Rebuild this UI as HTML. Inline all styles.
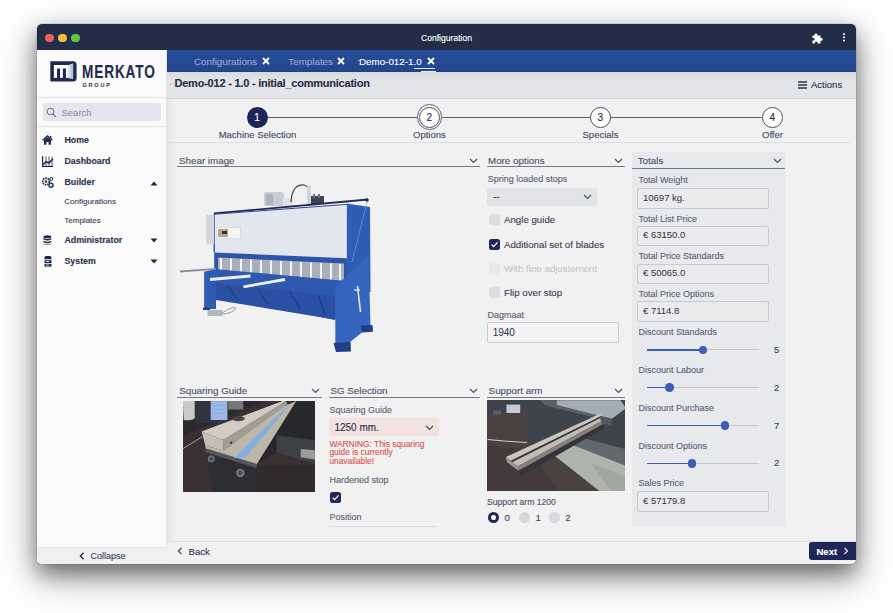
<!DOCTYPE html>
<html><head><meta charset="utf-8">
<style>
*{margin:0;padding:0;box-sizing:border-box}
html,body{width:893px;height:613px;overflow:hidden;background:#fff;font-family:"Liberation Sans",sans-serif}
.a{-webkit-text-stroke:0.12px currentColor}
.win{position:absolute;left:37px;top:24px;width:819px;height:540px;border-radius:5px;overflow:hidden;box-shadow:0 10px 22px 0 rgba(0,0,0,.5),0 14px 44px 3px rgba(0,0,0,.2),0 0 0 1px rgba(0,0,0,.08);background:#f1f1f1}
.pg{position:absolute;left:-37px;top:-24px;width:893px;height:613px}
.a{position:absolute;white-space:nowrap}
.title{left:37px;top:24px;width:819px;height:26px;background:#232d47}
.dot{position:absolute;width:8.6px;height:8.6px;border-radius:50%;top:33.5px}
.side{left:37px;top:50px;width:130px;height:514px;background:#fafafa;border-right:1px solid #e2e3e6}
.tabs{left:167px;top:50px;width:689px;height:21.5px;background:linear-gradient(#274d99,#23468c);border-bottom:1px solid #213f7c}
.crumb{left:167px;top:71.5px;width:689px;height:27px;background:linear-gradient(#d9dadf,#e3e4e8 35%,#e4e5e9);border-bottom:1px solid #d4d5da}
.tab{font-size:9.8px;color:#8ea6da;top:56.2px}
.x{font-size:10px;color:#fff;font-weight:bold}
.mi{font-size:8.8px;font-weight:bold;color:#2b3350}
.sub{font-size:8px;color:#3d4460}
.lbl{font-size:9px;color:#5b6277;margin-top:.7px}
.hdr{font-size:9.8px;color:#4b5268}
.uline{position:absolute;height:1.2px;background:#737787;border-radius:1px}
.inp{position:absolute;background:#ebebee;border:1px solid #c9cace;border-radius:2px;font-size:10px;color:#2b3048;padding-left:5px}
.stl{top:128.8px;width:200px;text-align:center;font-size:9.5px;color:#444a5e}
.cb{position:absolute;width:11px;height:11px;border-radius:2.5px;background:#dcdde2}
.cb.on{background:#1e2757}
.opt{font-size:9.7px;color:#3a4058}
.tin{left:637px;width:132px;height:20.5px;padding-top:2.8px;font-size:9.5px}
.trk{left:647.3px;width:111.4px;height:1.2px;background:#c5c7cd}
.fill{left:647.3px;height:1.6px;background:#3b5fb5}
.thumb{width:8.5px;height:8.5px;border-radius:50%;background:#3b5fb5}
.val{left:774px;font-size:9.5px;color:#3a4058;margin-top:-1px}
</style></head><body>
<div class="win"><div class="pg">
  <!-- title bar -->
  <div class="a title"></div>
  <div class="dot" style="left:45.3px;background:#ee5f57"></div>
  <div class="dot" style="left:58.2px;background:#f2be3d"></div>
  <div class="dot" style="left:71.4px;background:#5fc73f"></div>
  <div class="a" style="left:37px;width:819px;top:32.5px;text-align:center;color:#fff;font-size:8.6px">Configuration</div>

  <!-- sidebar -->
  <div class="a side"></div>
  <!-- logo -->
  <svg class="a" style="left:49px;top:60px" width="30" height="24" viewBox="0 0 30 24">
    <path d="M1.3 1.3 H24 Q27.6 1.3 27.6 5 V18 Q27.6 21.5 24 21.5 H1.3 Z" fill="#1f2a4f"/>
    <rect x="4.85" y="5" width="15" height="12.9" fill="#fff"/>
    <path d="M19.7 5 L24.2 3.2 L24.2 19.3 L19.7 17.9 Z" fill="#a9c6da"/>
    <path d="M19.7 5 L21.6 4.3 L21.6 18.5 L19.7 17.9 Z" fill="#d3e3ec"/>
    <rect x="8" y="8.5" width="3.1" height="9.5" fill="#1f2a4f"/>
    <rect x="13.85" y="8.5" width="3.15" height="9.5" fill="#1f2a4f"/>
    <rect x="5" y="8.2" width="0" height="10" fill="#1f2a4f"/>
  </svg>
  <div class="a" id="mk" style="left:81.6px;top:60.8px;font-size:18.4px;font-weight:bold;color:#1f2a4f;transform:scaleX(.74);transform-origin:0 0;letter-spacing:1.2px">MERKATO</div>
  <div class="a" style="left:82.5px;top:81.5px;font-size:5.5px;font-weight:bold;color:#3a3f52;letter-spacing:1.8px">GROUP</div>
  <div class="a" style="left:37px;top:97px;width:130px;height:1px;background:#e4e5e8"></div>
  <!-- search -->
  <div class="a" style="left:42.5px;top:103px;width:118.5px;height:18px;background:#e4e6eb;border-radius:3px"></div>
  <svg class="a" style="left:46px;top:107px" width="11" height="11" viewBox="0 0 11 11"><circle cx="4.5" cy="4.5" r="3.3" fill="none" stroke="#666b7b" stroke-width="1"/><path d="M6.9 6.9 L9.8 9.8" stroke="#666b7b" stroke-width="1.2"/></svg>
  <div class="a" style="left:61.5px;top:106.5px;font-size:9.5px;color:#8f94a3">Search</div>
  <div class="a" style="left:37px;top:126px;width:130px;height:1px;background:#e4e5e8"></div>
  <!-- menu -->
  <svg class="a" style="left:42px;top:135px" width="11" height="10" viewBox="0 0 11 10"><path d="M0.6 5.3 L5.5 1 L10.4 5.3" fill="none" stroke="#1f2a4f" stroke-width="1.5"/><path d="M2 5 L5.5 2.2 L9 5 V9.7 H6.6 V7 H4.4 V9.7 H2 Z" fill="#1f2a4f"/><rect x="8" y="1" width="1.3" height="2.5" fill="#1f2a4f"/></svg>
  <div class="a mi" style="left:64.5px;top:134.5px">Home</div>
  <svg class="a" style="left:42px;top:156px" width="12" height="11" viewBox="0 0 12 11"><path d="M0.6 0 V10.4 H11.2" fill="none" stroke="#1f2a4f" stroke-width="1.2"/><path d="M1 8.5 L4 6 L7 6.8 L11 3" fill="none" stroke="#1f2a4f" stroke-width="1.6"/><path d="M4 0.5 V9.5 M7 0.5 V9.5 M10 0.5 V9.5" stroke="#1f2a4f" stroke-width="0.8"/></svg>
  <div class="a mi" style="left:64.5px;top:155.5px">Dashboard</div>
  <svg class="a" style="left:42px;top:176.5px" width="12" height="11" viewBox="0 0 12 11"><circle cx="4" cy="4.5" r="3.3" fill="none" stroke="#1f2a4f" stroke-width="1.8" stroke-dasharray="1.6 0.8"/><circle cx="4" cy="4.5" r="1.2" fill="#1f2a4f"/><circle cx="9.2" cy="2" r="1.5" fill="none" stroke="#1f2a4f" stroke-width="1"/><circle cx="9" cy="8.3" r="2" fill="none" stroke="#1f2a4f" stroke-width="1.4"/></svg>
  <div class="a mi" style="left:64.5px;top:176.5px">Builder</div>
  <svg class="a" style="left:149.5px;top:180.5px" width="8" height="5" viewBox="0 0 8 5"><path d="M0.5 4.5 L4 0.5 L7.5 4.5 Z" fill="#1f2a4f"/></svg>
  <div class="a sub" style="left:64.3px;top:197px">Configurations</div>
  <div class="a sub" style="left:64.3px;top:215.5px">Templates</div>
  <svg class="a" style="left:43.4px;top:235.2px" width="8.6" height="11" viewBox="0 0 8.6 11"><ellipse cx="4.3" cy="1.7" rx="3.95" ry="1.55" fill="#1f2a4f"/><path d="M0.35 2.9 V4.5 Q4.3 6.5 8.25 4.5 V2.9 Q4.3 4.9 0.35 2.9 Z" fill="#1f2a4f"/><path d="M0.35 5.7 V7.3 Q4.3 9.3 8.25 7.3 V5.7 Q4.3 7.7 0.35 5.7 Z" fill="#1f2a4f"/><path d="M0.35 8.5 V9.1 Q4.3 11 8.25 9.1 V8.5 Q4.3 10.5 0.35 8.5 Z" fill="#1f2a4f"/></svg>
  <div class="a mi" style="left:64.5px;top:235px">Administrator</div>
  <svg class="a" style="left:149.5px;top:238px" width="8" height="5" viewBox="0 0 8 5"><path d="M0.5 0.5 L4 4.5 L7.5 0.5 Z" fill="#1f2a4f"/></svg>
  <svg class="a" style="left:44px;top:256px" width="8" height="11" viewBox="0 0 8 11"><path d="M1.5 0 H6.5 L7.5 1.5 V3.3 H0.5 V1.5 Z" fill="#1f2a4f"/><rect x="0.5" y="4.2" width="7" height="2.8" fill="#1f2a4f"/><rect x="0.5" y="7.8" width="7" height="2.8" fill="#1f2a4f"/><rect x="2" y="5" width="3" height="0.8" fill="#fff"/><rect x="2" y="8.6" width="3" height="0.8" fill="#fff"/></svg>
  <div class="a mi" style="left:64.5px;top:256px">System</div>
  <svg class="a" style="left:149.5px;top:259px" width="8" height="5" viewBox="0 0 8 5"><path d="M0.5 0.5 L4 4.5 L7.5 0.5 Z" fill="#1f2a4f"/></svg>
  <!-- collapse -->
  <div class="a" style="left:37px;top:547px;width:130px;height:17px;background:#efeff1;border-top:1px solid #e2e3e6"></div>
  <svg class="a" style="left:78.5px;top:552px" width="6" height="8" viewBox="0 0 6 8"><path d="M4.5 0.8 L1.5 4 L4.5 7.2" fill="none" stroke="#2b3350" stroke-width="1.5"/></svg>
  <div class="a" style="left:90.5px;top:551px;font-size:9px;color:#3d4460">Collapse</div>

  <!-- tabs -->
  <div class="a tabs"></div>
  <div class="a tab" style="left:194px">Configurations</div>
  <svg class="a" style="left:262.0px;top:57px" width="8" height="8" viewBox="0 0 8 8"><path d="M1 1 L7 7 M7 1 L1 7" stroke="#fff" stroke-width="1.8"/></svg>
  <div class="a tab" style="left:288.3px">Templates</div>
  <svg class="a" style="left:337.0px;top:57px" width="8" height="8" viewBox="0 0 8 8"><path d="M1 1 L7 7 M7 1 L1 7" stroke="#fff" stroke-width="1.8"/></svg>
  <div class="a" style="left:357.5px;top:60px;width:1px;height:1px;background:#c8d3ee"></div>
  <div class="a tab" style="left:359px;color:#fff">Demo-012-1.0</div>
  <svg class="a" style="left:426.5px;top:57px" width="8" height="8" viewBox="0 0 8 8"><path d="M1 1 L7 7 M7 1 L1 7" stroke="#fff" stroke-width="1.8"/></svg>
  <div class="a" style="left:414px;top:68px;width:21px;height:1px;background:#dfe6f6"></div>
  <div class="a" style="left:421px;top:70.5px;width:15px;height:1.2px;background:#e8ecf5"></div>
  <div class="a crumb"></div>
  <div class="a" style="left:170px;top:83.5px;width:1px;height:1px;background:#8a8fa0"></div>
  <div class="a" style="left:174.5px;top:76.8px;font-size:11px;letter-spacing:-0.22px;font-weight:bold;color:#262c44">Demo-012 - 1.0 - initial_communication</div>
  <svg class="a" style="left:797.5px;top:80.5px" width="10" height="8" viewBox="0 0 10 8"><path d="M0 1 H9 M0 4 H9 M0 7 H9" stroke="#2b3350" stroke-width="1.4"/></svg>
  <div class="a" style="left:811px;top:78.8px;font-size:9.5px;color:#2b3350">Actions</div>
  <!-- title icons -->
  <svg class="a" style="left:811.5px;top:32.5px" width="11" height="11" viewBox="0 0 11 11"><path d="M4 0.5 C5.5 0.5 5.8 1.5 5.3 2.6 L8.5 2.6 L8.5 5.3 C9.8 4.8 10.6 5.3 10.6 6.4 C10.6 7.5 9.8 8 8.5 7.5 L8.5 10.5 L5.5 10.5 C6 9.3 5.5 8.4 4.2 8.4 C3 8.4 2.5 9.3 3 10.5 L0.5 10.5 L0.5 7.4 C1.8 7.9 2.6 7.3 2.6 6.2 C2.6 5.1 1.8 4.6 0.5 5.1 L0.5 2.6 L2.8 2.6 C2.3 1.5 2.6 0.5 4 0.5 Z" fill="#fff"/></svg>
  <div class="a" style="left:842.5px;top:33px;width:2.2px;height:2.2px;border-radius:50%;background:#fff;box-shadow:0 3.3px 0 #fff,0 6.6px 0 #fff"></div>
  <!-- main shadow -->
  <div class="a" style="left:167px;top:98px;width:8px;height:443px;background:linear-gradient(90deg,rgba(0,0,0,.05),rgba(0,0,0,0))"></div>
  <!-- stepper -->
  <div class="a" style="left:257px;top:116.6px;width:515px;height:1.3px;background:#5a5f70"></div>
  <div class="a" style="left:246.6px;top:106.7px;width:21px;height:21px;border-radius:50%;background:#1e2757"></div>
  <div class="a" style="left:246.6px;top:111.5px;width:21px;text-align:center;font-size:10px;color:#fff">1</div>
  <div class="a" style="left:416.5px;top:104.4px;width:25.8px;height:25.8px;border-radius:50%;border:1.3px solid #5f6476;background:#f6f6f8"></div>
  <div class="a" style="left:419px;top:107px;width:20.8px;height:20.8px;border-radius:50%;border:1.3px solid #4a4f62;background:#fff"></div>
  <div class="a" style="left:419px;top:111.5px;width:20.8px;text-align:center;font-size:10px;color:#262b3f">2</div>
  <div class="a" style="left:590px;top:107px;width:20.8px;height:20.8px;border-radius:50%;border:1.3px solid #4a4f62;background:#fff"></div>
  <div class="a" style="left:590px;top:111.5px;width:20.8px;text-align:center;font-size:10px;color:#262b3f">3</div>
  <div class="a" style="left:762px;top:107px;width:20.8px;height:20.8px;border-radius:50%;border:1.3px solid #4a4f62;background:#fff"></div>
  <div class="a" style="left:762px;top:111.5px;width:20.8px;text-align:center;font-size:10px;color:#262b3f">4</div>
  <div class="a stl" style="left:157.5px">Machine Selection</div>
  <div class="a stl" style="left:329.4px">Options</div>
  <div class="a stl" style="left:500.5px">Specials</div>
  <div class="a stl" style="left:672.5px">Offer</div>
  <div class="a" style="left:168px;top:142px;width:682px;height:1px;background:#dcdde1"></div>

  <!-- section headers -->
  <div class="a hdr" style="left:179px;top:154.5px">Shear image</div>
  <div class="uline" style="left:177px;top:166.3px;width:303px"></div>
  <svg class="a chev" style="left:469px;top:157.5px" width="9" height="6" viewBox="0 0 9 6"><path d="M1 1 L4.5 4.5 L8 1" fill="none" stroke="#4b5268" stroke-width="1.2"/></svg>

  <div class="a hdr" style="left:488px;top:154.5px">More options</div>
  <div class="uline" style="left:487px;top:166.3px;width:138px"></div>
  <svg class="a" style="left:614px;top:157.5px" width="9" height="6" viewBox="0 0 9 6"><path d="M1 1 L4.5 4.5 L8 1" fill="none" stroke="#4b5268" stroke-width="1.2"/></svg>

  <div class="a lbl" style="left:487.8px;top:173.3px">Spring loaded stops</div>
  <div class="a" style="left:487px;top:187.5px;width:110px;height:18.5px;background:#e2e3e7;border-radius:3px"></div>
  <div class="a" style="left:493px;top:191px;font-size:10px;color:#2b3048">--</div>
  <svg class="a" style="left:582.5px;top:193.5px" width="9" height="6" viewBox="0 0 9 6"><path d="M1 1 L4.5 4.5 L8 1" fill="none" stroke="#4b5268" stroke-width="1.2"/></svg>

  <div class="a cb" style="left:488.5px;top:214px"></div>
  <div class="a opt" style="left:504px;top:214.3px">Angle guide</div>
  <div class="a cb on" style="left:488.5px;top:238.5px"><svg width="11" height="11" viewBox="0 0 11 11" style="position:absolute;left:0;top:0"><path d="M2.6 5.6 L4.6 7.6 L8.6 3.4" fill="none" stroke="#fff" stroke-width="1.3"/></svg></div>
  <div class="a opt" style="left:504px;top:238.8px">Additional set of blades</div>
  <div class="a cb" style="left:488.5px;top:263px;background:#e8e9ec"></div>
  <div class="a opt" style="left:504px;top:263.3px;color:#c5c8d0">With fine adjustement</div>
  <div class="a cb" style="left:488.5px;top:287px"></div>
  <div class="a opt" style="left:504px;top:287.3px">Flip over stop</div>
  <div class="a lbl" style="left:487.5px;top:309.8px">Dagmaat</div>
  <div class="inp" style="left:486.7px;top:322.4px;width:132.3px;height:20.6px;background:#f3f3f5;padding-top:4px">1940</div>

  <!-- totals panel -->
  <div class="a" style="left:632px;top:151.5px;width:153px;height:374.5px;background:#e8e9ec"></div>
  <div class="a hdr" style="left:637.7px;top:154.8px">Totals</div>
  <div class="uline" style="left:632px;top:167.6px;width:153px"></div>
  <svg class="a" style="left:772.5px;top:157.5px" width="9" height="6" viewBox="0 0 9 6"><path d="M1 1 L4.5 4.5 L8 1" fill="none" stroke="#4b5268" stroke-width="1.2"/></svg>
  <div class="a lbl" style="left:638.4px;top:174.2px">Total Weight</div>
  <div class="inp tin" style="top:188px">10697 kg.</div>
  <div class="a lbl" style="left:638.4px;top:213px">Total List Price</div>
  <div class="inp tin" style="top:225.5px">&#8364; 63150.0</div>
  <div class="a lbl" style="left:638.4px;top:250.6px">Total Price Standards</div>
  <div class="inp tin" style="top:263.5px">&#8364; 50065.0</div>
  <div class="a lbl" style="left:638.4px;top:288.5px">Total Price Options</div>
  <div class="inp tin" style="top:301.4px">&#8364; 7114.8</div>
  <div class="a lbl" style="left:638.4px;top:326.3px">Discount Standards</div>
  <div class="a trk" style="top:349.2px"></div><div class="a fill" style="top:349px;width:56px"></div><div class="a thumb" style="left:698.8px;top:345.5px"></div>
  <div class="a val" style="top:344.8px">5</div>
  <div class="a lbl" style="left:638.4px;top:364.3px">Discount Labour</div>
  <div class="a trk" style="top:387px"></div><div class="a fill" style="top:386.8px;width:22.5px"></div><div class="a thumb" style="left:665.3px;top:383.3px"></div>
  <div class="a val" style="top:382.5px">2</div>
  <div class="a lbl" style="left:638.4px;top:402px">Discount Purchase</div>
  <div class="a trk" style="top:425px"></div><div class="a fill" style="top:424.8px;width:78px"></div><div class="a thumb" style="left:720.8px;top:421.3px"></div>
  <div class="a val" style="top:420.5px">7</div>
  <div class="a lbl" style="left:638.4px;top:440.5px">Discount Options</div>
  <div class="a trk" style="top:462.7px"></div><div class="a fill" style="top:462.5px;width:45px"></div><div class="a thumb" style="left:687.6px;top:459px"></div>
  <div class="a val" style="top:458.3px">2</div>
  <div class="a lbl" style="left:638.4px;top:477.8px">Sales Price</div>
  <div class="inp tin" style="top:491.3px">&#8364; 57179.8</div>

  <!-- lower sections -->
  <div class="a hdr" style="left:179.2px;top:385px">Squaring Guide</div>
  <div class="uline" style="left:177px;top:397.3px;width:145px"></div>
  <svg class="a" style="left:310.5px;top:388px" width="9" height="6" viewBox="0 0 9 6"><path d="M1 1 L4.5 4.5 L8 1" fill="none" stroke="#4b5268" stroke-width="1.2"/></svg>

  <div class="a hdr" style="left:330.4px;top:385.3px">SG Selection</div>
  <div class="uline" style="left:329px;top:397.3px;width:151px"></div>
  <svg class="a" style="left:469px;top:388px" width="9" height="6" viewBox="0 0 9 6"><path d="M1 1 L4.5 4.5 L8 1" fill="none" stroke="#4b5268" stroke-width="1.2"/></svg>
  <div class="a lbl" style="left:329.4px;top:404px">Squaring Guide</div>
  <div class="a" style="left:329px;top:418px;width:110.3px;height:17.6px;background:#f3e2df;border-radius:3px"></div>
  <div class="a" style="left:334.4px;top:422px;font-size:10px;color:#2b3048">1250 mm.</div>
  <svg class="a" style="left:424.5px;top:424.5px" width="9" height="6" viewBox="0 0 9 6"><path d="M1 1 L4.5 4.5 L8 1" fill="none" stroke="#4b5268" stroke-width="1.2"/></svg>
  <div class="a" style="left:329.4px;top:439.8px;font-size:8.4px;line-height:8.4px;color:#d9534f">WARNING: This squaring<br>guide is currently<br>unavailable!</div>
  <div class="a lbl" style="left:329.4px;top:474.5px">Hardened stop</div>
  <div class="a cb on" style="left:330.4px;top:491.7px"><svg width="11" height="11" viewBox="0 0 11 11" style="position:absolute;left:0;top:0"><path d="M2.6 5.6 L4.6 7.6 L8.6 3.4" fill="none" stroke="#fff" stroke-width="1.3"/></svg></div>
  <div class="a lbl" style="left:329.4px;top:511.8px">Position</div>
  <div class="a" style="left:329px;top:525.5px;width:108.5px;height:1px;background:#dcdde2"></div>

  <div class="a hdr" style="left:488.6px;top:385.3px">Support arm</div>
  <div class="uline" style="left:487px;top:397.3px;width:138px"></div>
  <svg class="a" style="left:614px;top:388px" width="9" height="6" viewBox="0 0 9 6"><path d="M1 1 L4.5 4.5 L8 1" fill="none" stroke="#4b5268" stroke-width="1.2"/></svg>
  <div class="a lbl" style="left:487px;top:496.5px;font-size:8.6px;color:#4a5066">Support arm 1200</div>
  <div class="a" style="left:488px;top:511.8px;width:11px;height:11px;border-radius:50%;background:#1e2757"></div>
  <div class="a" style="left:491.2px;top:515px;width:4.6px;height:4.6px;border-radius:50%;background:#fff"></div>
  <div class="a opt" style="left:504.5px;top:512px">0</div>
  <div class="a" style="left:519.4px;top:511.8px;width:11px;height:11px;border-radius:50%;background:#d8d9de"></div>
  <div class="a opt" style="left:535.5px;top:512px">1</div>
  <div class="a" style="left:549.4px;top:511.8px;width:11px;height:11px;border-radius:50%;background:#d8d9de"></div>
  <div class="a opt" style="left:565.2px;top:512px">2</div>


  <!-- machine image -->
  <svg class="a" style="left:175px;top:175px" width="205" height="185" viewBox="175 175 205 185">
    <!-- motor & hydraulics -->
    <rect x="264" y="192" width="20" height="14" rx="2" fill="#c9ced6"/>
    <rect x="266" y="194" width="7" height="11" fill="#aeb4bd"/>
    <rect x="283" y="198" width="10" height="8" fill="#dfe2e6"/>
    <path d="M291 202 Q292 184 304 185 Q309 186 309 194 L309 204" fill="none" stroke="#3a3f4a" stroke-width="1.2"/>
    <rect x="307" y="186" width="4" height="18" fill="#cfd3d8"/>
    <rect x="311" y="196" width="13" height="8" fill="#3d4352"/>
    <rect x="313" y="194" width="2" height="4" fill="#6a7080"/><rect x="318" y="194" width="2" height="4" fill="#6a7080"/>
    <!-- top rod -->
    <path d="M214 213.5 L368 199.5" stroke="#1f2c52" stroke-width="1.8"/>
    <circle cx="367" cy="200" r="1.8" fill="#1f2c52"/>
    <!-- right side panel -->
    <path d="M346.5 203.5 L370 207 L370.5 292 L335.3 292 L346.5 258 Z" fill="#2f5db3"/>
    <path d="M367 202 L352 262" stroke="#8da2c9" stroke-width="0.6"/>
    <!-- light panel -->
    <path d="M214.2 214.2 L346.7 204.4 L346.7 258.2 L214.2 252.5 Z" fill="#e2e6ed"/>
    <path d="M214.2 214.2 L346.7 204.4" stroke="#2c4a8c" stroke-width="1"/>
    <path d="M214.2 214.2 L214.2 252.5" stroke="#2f5db3" stroke-width="1.5"/>
    <!-- left side box -->
    <rect x="206" y="215" width="8.2" height="29.4" fill="#d3d6db"/>
    <rect x="216.6" y="227.2" width="23.7" height="11.5" fill="#f4f4f4" stroke="#c9ccd2" stroke-width="0.5"/>
    <rect x="218" y="229" width="10" height="8" fill="#b8a48a"/>
    <rect x="222" y="231" width="5" height="3" fill="#333"/>
    <!-- blue band + blades -->
    <path d="M214.2 252.5 L346.7 258.2 L346.7 281 L214.2 271 Z" fill="#2a55a8"/>
    <path d="M218 257.5 L344 263.5 L344 281 L218 272.5 Z" fill="#a9b0bb"/>
    <g stroke="#f2f4f7" stroke-width="2">
      <path d="M221 258 V272"/><path d="M231 258.5 V273"/><path d="M241 259 V273.5"/><path d="M251 259.5 V274.5"/><path d="M261 260 V275"/><path d="M271 260.5 V276"/><path d="M281 261 V276.5"/><path d="M291 261.5 V277.5"/><path d="M301 262 V278"/><path d="M311 262.5 V279"/><path d="M321 263 V279.5"/><path d="M331 263.5 V280"/><path d="M340 264 V280.5"/>
    </g>
    <!-- lower body -->
    <path d="M204.4 272 L214 269 L346.5 281 L346.5 293 L335 320 L270 307 L216 297 L216 309 L204.4 309 Z" fill="#2f59ae"/>
    <path d="M216 283 L335 296 L335 319.5 L216 300 Z" fill="#2a4fa3"/>
    <path d="M228 286 L238 300 M258 289 L268 304 M290 292 L300 309 M318 295 L325 315" stroke="#1e3d85" stroke-width="1.2"/>
    <!-- right leg -->
    <path d="M335.3 287 L368.5 255 L370.5 325.5 L348.3 343.5 L335.3 346.5 Z" fill="#3465bf"/>
    <path d="M333.5 343 L350.5 342 L351 351.5 L336 352 Z" fill="#1f3f88"/>
    <path d="M361 325.5 L372.5 325 L373 331.8 L362 332.5 Z" fill="#1f3f88"/>
    <path d="M357.5 286 L360.5 312" stroke="#f0f2f5" stroke-width="1.5"/>
    <path d="M354 290 L360 290" stroke="#f0f2f5" stroke-width="1.2"/>
    <!-- left leg -->
    <rect x="204.4" y="271.5" width="11.4" height="37.4" fill="#2f5cb0"/>
    <rect x="203" y="307.5" width="7" height="2.5" fill="#1f3f88"/>
    <!-- arms -->
    <path d="M180 271.5 L216 268.8" stroke="#8c9098" stroke-width="1.8"/>
    <path d="M210 279.5 L250.5 276" stroke="#eef0f3" stroke-width="2.8"/>
    <path d="M243.5 286.8 L285 279.5" stroke="#eef0f3" stroke-width="2.8"/>
    <!-- pedal -->
    <rect x="207.6" y="310" width="14.7" height="6" fill="#b2b6bd"/>
    <path d="M222 313 Q232 306 236 308 Q232 314 222 314" fill="none" stroke="#666" stroke-width="0.6"/>
  </svg>

  <!-- squaring guide photo -->
  <svg class="a" style="left:183.3px;top:400.7px" width="131.8" height="91.7" viewBox="183.3 400.7 131.8 91.7">
    <rect x="183" y="400" width="133" height="93" fill="#383033"/>
    <path d="M183 436 L243 410 L270 400 L183 400 Z" fill="#2c2a2e"/>
    <path d="M183 400 H198.2 V417 Q191 421 184 419.7 Z" fill="#c9c9c6"/>
    <rect x="195" y="400.7" width="33.5" height="22" fill="#2f3440"/>
    <rect x="211" y="400.8" width="16.7" height="18.9" fill="#9ab8e8"/>
    <path d="M212 405 H227 M212 409 H227 M212 413 H227" stroke="#7f9fd4" stroke-width="0.5"/>
    <rect x="228.5" y="400.7" width="15" height="8.5" fill="#77777a"/>
    <path d="M183 448.5 L202.7 436.4" stroke="#cfcfcf" stroke-width="0.7"/>
    <!-- right machine -->
    <path d="M293 400.7 H315.1 V464 L277 452 L257 464 Z" fill="#26282c"/>
    <path d="M276.8 435 L315.1 440 L315.1 464 L276.8 452 Z" fill="#3d4146"/>
    <path d="M301 448.6 L315.1 450 L315.1 459.2 L301 457 Z" fill="#9d9d98"/>
    <!-- box body -->
    <path d="M205.7 449 L257.1 465 L315.1 465 L315.1 492.4 L214 492.4 Z" fill="#302a2c"/>
    <path d="M205.7 449 L257.1 465 L257.1 492.4 L214 492.4 L208 460 Z" fill="#2c2e33"/>
    <path d="M205.7 448 L257.1 463.7 L257.1 468 L205.7 452 Z" fill="#55565b"/>
    <circle cx="211.5" cy="458.5" r="3.6" fill="#6f6f70"/><circle cx="211.5" cy="458.5" r="2" fill="#4a4a4c"/>
    <circle cx="240.6" cy="472.7" r="4.2" fill="#77777a"/><circle cx="240.6" cy="472.7" r="2.3" fill="#4f4f52"/>
    <!-- plate -->
    <path d="M205.7 445.5 L223.9 450 L282.9 406.8 L296.6 400.7 L257.1 463.7 L205.7 448 Z" fill="#bdb7ab"/>
    <path d="M234 458 L284.4 409.1 L289 406 L246 457 Z" fill="#7fb0e0"/>
    <!-- beam -->
    <path d="M201.9 431.1 L283 400.7 L286 400.7 L250 425.8 L223.2 439.4 Z" fill="#d2cdc2"/>
    <path d="M201.9 431.1 L223.2 439.4 L223.9 450 L205.7 445.5 Z" fill="#c6c0b3"/>
    <path d="M223.2 439.4 L286 400.7 L288 404 L223.9 450 Z" fill="#a29d92"/>
    <circle cx="231.5" cy="442.5" r="1.2" fill="#3a3836"/>
    <ellipse cx="238.6" cy="418.3" rx="6.5" ry="2.6" fill="#4a4644"/>
  </svg>

  <!-- support arm photo -->
  <svg class="a" style="left:487px;top:399.7px" width="138" height="91.8" viewBox="487 399.7 138 91.8">
    <rect x="486" y="399" width="140" height="93" fill="#4a4241"/>
    <path d="M487 445 L530 450 L560 491.5 L487 491.5 Z" fill="#433b3b"/>
    <rect x="487" y="400" width="35.4" height="12.7" fill="#3f444c"/>
    <rect x="506.5" y="404.3" width="13.7" height="8.4" fill="#c5ccd5"/>
    <rect x="493" y="410" width="8" height="4" fill="#5a5e66"/>
    <path d="M487.5 439.2 Q505 441 527 442.3" fill="none" stroke="#dedede" stroke-width="0.9"/>
    <!-- machine body -->
    <path d="M522.4 400 L626 400 L626 462 L572 444.5 L529.3 443 Z" fill="#3d444c"/>
    <path d="M557 400 L620.7 400 L626 408 L611.6 418.7 L557 405 Z" fill="#a3adb8"/>
    <path d="M540 400 L557 400 L557 405 L611.6 418.7 L609 421 L545 405 Z" fill="#5a6168"/>
    <path d="M573 435 L626 449 L626 466 L572.2 444.5 Z" fill="#62686d"/>
    <!-- lower glass plate -->
    <path d="M554 455 L572.2 444.5 L626 465.7 L626 492 L601 492 Z" fill="#b0b4ae"/>
    <path d="M590 462 L626 476 L626 492 L612 492 Z" fill="#9fa9a0"/>
    <!-- arm -->
    <path d="M505.7 456.7 L599.5 413.6 L602 415.5 L511 460.5 Z" fill="#c9c6be"/>
    <path d="M511 460.5 L602 415.5 L602.5 416.8 L512 462 Z" fill="#333335"/>
    <path d="M512 462 L602.5 416.8 L604 419.5 L517.9 466 Z" fill="#c0bdb5"/>
    <path d="M505.7 456.7 L511 460.5 L512 462 L517.9 466 L518.6 470.4 L507 462 Z" fill="#9a978f"/>
    <path d="M517.9 466 L604 419.5 L604 423.5 L518.6 470.4 Z" fill="#85827c"/>
    <path d="M518.6 470.4 L604 423.5 L604 428 L521 476 Z" fill="#34353a"/>
    <path d="M599.5 415.7 L611.6 418 L611.6 424.8 L602 424 Z" fill="#55585d"/>
  </svg>

  <!-- footer -->
  <div class="a" style="left:167px;top:540.5px;width:689px;height:1px;background:#dcdde1"></div>
  <svg class="a" style="left:177px;top:546.5px" width="6" height="8" viewBox="0 0 6 8"><path d="M4.5 0.8 L1.5 4 L4.5 7.2" fill="none" stroke="#3d4460" stroke-width="1.2"/></svg>
  <div class="a" style="left:188.6px;top:546px;font-size:9.5px;color:#2b3350">Back</div>
  <div class="a" style="left:809px;top:542px;width:47px;height:18px;background:#1e2757;border-radius:3px 0 0 3px"></div>
  <div class="a" style="left:816.5px;top:546px;font-size:9.5px;font-weight:bold;color:#fff">Next</div>
  <svg class="a" style="left:843px;top:547px" width="6" height="8" viewBox="0 0 6 8"><path d="M1.5 0.8 L4.5 4 L1.5 7.2" fill="none" stroke="#fff" stroke-width="1.1"/></svg>

</div></div>
</body></html>
